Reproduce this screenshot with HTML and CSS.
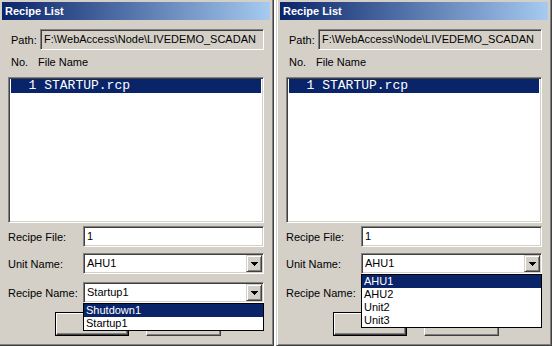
FILE: index.html
```html
<!DOCTYPE html>
<html>
<head>
<meta charset="utf-8">
<link rel="stylesheet" href="styles.css">
</head>
<body>
<div class="desk">
  <div class="win">
    <div class="title">Recipe List</div>
    <div class="body">
      <div class="path-row"><span class="path-lbl">Path:</span><div class="field ro">F:\WebAccess\Node\LIVEDEMO_SCADAN</div></div>
      <div class="list-head"><span class="no">No.</span><span>File Name</span></div>
      <div class="listbox"><div class="item sel">  1 STARTUP.rcp</div></div>
      <div class="row r-file"><span class="lbl">Recipe File:</span><div class="field">1</div></div>
      <div class="row r-unit"><span class="lbl">Unit Name:</span>
        <div class="combo"><div class="field">AHU1</div><span class="drop-btn"><svg width="7" height="4" viewBox="0 0 7 4" shape-rendering="crispEdges"><rect x="0" y="0" width="7" height="1"/><rect x="1" y="1" width="5" height="1"/><rect x="2" y="2" width="3" height="1"/><rect x="3" y="3" width="1" height="1"/></svg></span></div>
      </div>
      <div class="row r-recipe"><span class="lbl">Recipe Name:</span>
        <div class="combo"><div class="field">Startup1</div><span class="drop-btn"><svg width="7" height="4" viewBox="0 0 7 4" shape-rendering="crispEdges"><rect x="0" y="0" width="7" height="1"/><rect x="1" y="1" width="5" height="1"/><rect x="2" y="2" width="3" height="1"/><rect x="3" y="3" width="1" height="1"/></svg></span>
          <ul class="droplist">
            <li class="sel">Shutdown1</li>
            <li>Startup1</li>
          </ul>
        </div>
      </div>
      <div class="buttons"><span class="btn default"><span class="btn-in"></span></span><span class="btn"></span></div>
    </div>
  </div>
  <div class="win">
    <div class="title">Recipe List</div>
    <div class="body">
      <div class="path-row"><span class="path-lbl">Path:</span><div class="field ro">F:\WebAccess\Node\LIVEDEMO_SCADAN</div></div>
      <div class="list-head"><span class="no">No.</span><span>File Name</span></div>
      <div class="listbox"><div class="item sel">  1 STARTUP.rcp</div></div>
      <div class="row r-file"><span class="lbl">Recipe File:</span><div class="field">1</div></div>
      <div class="row r-unit"><span class="lbl">Unit Name:</span>
        <div class="combo"><div class="field">AHU1</div><span class="drop-btn"><svg width="7" height="4" viewBox="0 0 7 4" shape-rendering="crispEdges"><rect x="0" y="0" width="7" height="1"/><rect x="1" y="1" width="5" height="1"/><rect x="2" y="2" width="3" height="1"/><rect x="3" y="3" width="1" height="1"/></svg></span>
          <ul class="droplist">
            <li class="sel">AHU1</li>
            <li>AHU2</li>
            <li>Unit2</li>
            <li>Unit3</li>
          </ul>
        </div>
      </div>
      <div class="row r-recipe"><span class="lbl">Recipe Name:</span>
        <div class="combo"><div class="field"></div><span class="drop-btn"></span></div>
      </div>
      <div class="buttons"><span class="btn default"><span class="btn-in"></span></span><span class="btn"></span></div>
    </div>
  </div>
</div>
</body>
</html>
```
FILE: styles.css
```css
* { box-sizing: border-box; }
html, body { margin: 0; padding: 0; }
body {
  width: 552px;
  height: 346px;
  overflow: hidden;
  background: #ffffff;
  font-family: "Liberation Sans", Arial, sans-serif;
  font-size: 11px;
  color: #000;
}
.desk {
  display: flex;
  gap: 2px;
  margin: -2px 0 0 -2px;
}
.win {
  width: 276px;
  height: 348px;
  flex: none;
  background: #d4d0c8;
  border: 1px solid;
  border-color: #d4d0c8 #404040 #404040 #d4d0c8;
  box-shadow: inset 1px 1px #ffffff, inset -1px -1px #808080;
  padding: 3px;
  display: flex;
  flex-direction: column;
}
.title {
  height: 18px;
  flex: none;
  background: linear-gradient(to right, #0a246a, #a6caf0);
  color: #fff;
  font-weight: bold;
  font-size: 11px;
  line-height: 18px;
  padding-left: 3px;
}
.body {
  padding: 9px 6px 0 6px;
  display: flex;
  flex-direction: column;
}
.field {
  height: 21px;
  background: #fff;
  border: 1px solid;
  border-color: #808080 #fff #fff #808080;
  box-shadow: inset 1px 1px #404040, inset -1px -1px #d4d0c8;
  padding: 0 3px;
  line-height: 19px;
  white-space: nowrap;
  overflow: hidden;
}
.field.ro { background: #d4d0c8; }
.path-row {
  display: flex;
  align-items: center;
}
.path-lbl {
  width: 32px;
  padding-left: 3px;
  flex: none;
}
.path-row .field { flex: 1; }
.list-head {
  height: 14px;
  line-height: 14px;
  margin: 5px 0 8px 3px;
  display: flex;
}
.list-head .no { width: 27px; }
.listbox {
  height: 146px;
  background: #fff;
  border: 1px solid;
  border-color: #808080 #fff #fff #808080;
  box-shadow: inset 1px 1px #404040, inset -1px -1px #d4d0c8;
  padding: 1px 2px;
}
.item {
  font-family: "Liberation Mono", "Courier New", monospace;
  font-size: 13px;
  line-height: 14px;
  height: 14px;
  white-space: pre;
  padding-left: 2px;
}
.item.sel { background: #0a246a; color: #fff; }
.row {
  display: flex;
  align-items: center;
}
.lbl { width: 75px; flex: none; }
.row .field, .row .combo { flex: 1; }
.r-file { margin-top: 3px; }
.r-unit { margin-top: 6px; }
.r-recipe { margin-top: 8px; }
.combo { position: relative; }
.combo .field { padding-right: 20px; }
.drop-btn {
  position: absolute;
  right: 2px;
  top: 2px;
  width: 16px;
  height: 17px;
  background: #d4d0c8;
  border: 1px solid;
  border-color: #d4d0c8 #404040 #404040 #d4d0c8;
  box-shadow: inset 1px 1px #fff, inset -1px -1px #808080;
  display: flex;
  align-items: center;
  justify-content: center;
}
.drop-btn svg { fill: #000; display: block; }
.droplist {
  position: absolute;
  left: 0;
  right: 0;
  top: 100%;
  margin: 0;
  padding: 0;
  list-style: none;
  background: #fff;
  border: 1px solid #000;
  z-index: 2;
}
.droplist li {
  height: 13px;
  line-height: 13px;
  padding-left: 2px;
}
.droplist li.sel { background: #0a246a; color: #fff; }
.buttons {
  display: flex;
  gap: 17px;
  margin: 9px 0 0 47px;
}
.btn {
  width: 75px;
  height: 24px;
  background: #d4d0c8;
  border: 1px solid;
  border-color: #fff #404040 #404040 #fff;
  box-shadow: inset -1px -1px #808080;
  display: block;
}
.btn.default {
  width: 74px;
  border-color: #000;
  box-shadow: none;
  padding: 0;
}
.btn-in {
  display: block;
  height: 100%;
  border: 1px solid;
  border-color: #fff #404040 #404040 #fff;
  box-shadow: inset -1px -1px #808080;
}
```
